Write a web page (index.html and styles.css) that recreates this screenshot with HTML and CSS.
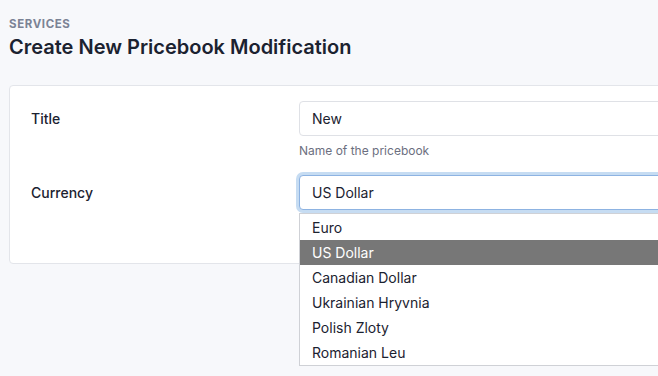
FILE: index.html
```html
<!DOCTYPE html>
<html>
<head>
<meta charset="utf-8">
<link rel="stylesheet" href="styles.css">
</head>
<body>
<div class="page">
  <div class="eyebrow">SERVICES</div>
  <h1 class="heading">Create New Pricebook Modification</h1>
  <div class="card">
    <div class="row">
      <div class="label">Title</div>
      <div class="field">
        <div class="input">New</div>
        <div class="help">Name of the pricebook</div>
      </div>
    </div>
    <div class="row row-currency">
      <div class="label">Currency</div>
      <div class="field select-wrap">
        <div class="input focused">US Dollar</div>
        <ul class="dropdown">
          <li class="opt">Euro</li>
          <li class="opt selected">US Dollar</li>
          <li class="opt">Canadian Dollar</li>
          <li class="opt">Ukrainian Hryvnia</li>
          <li class="opt">Polish Zloty</li>
          <li class="opt">Romanian Leu</li>
        </ul>
      </div>
    </div>
  </div>
</div>
</body>
</html>
```
FILE: styles.css
```css
html, body {
  margin: 0;
  padding: 0;
  background: #f7f8fb;
  overflow: hidden;
  width: 658px;
  height: 376px;
}
body {
  font-family: Inter, "Noto Sans", sans-serif;
  color: #1b2230;
}
.page {
  padding: 17px 0 0 9px;
  width: 720px;
}
.eyebrow {
  font-size: 11.5px;
  font-weight: 700;
  letter-spacing: 0.6px;
  color: #7b8395;
  line-height: 14px;
}
.heading {
  margin: 4px 0 0 0;
  font-size: 20px;
  font-weight: 600;
  line-height: 25px;
  color: #1b2230;
  letter-spacing: 0;
}
.card {
  margin-top: 25px;
  background: #fff;
  border: 1px solid #e3e5ea;
  border-radius: 4px;
  padding: 15px 0 53px 21px;
}
.row {
  display: grid;
  grid-template-columns: 268px 1fr;
  align-items: start;
}
.row-currency {
  margin-top: 17px;
}
.label {
  font-size: 14px;
  font-weight: 450;
  line-height: 35px;
  color: #1b2230;
}
.field {
  display: flex;
  flex-direction: column;
}
.input {
  height: 33px;
  border: 1px solid #dfe1e6;
  border-radius: 4px;
  padding-left: 12px;
  font-size: 14px;
  line-height: 33px;
  color: #1b2230;
  background: #fff;
}
.input.focused {
  border-color: #8db3e2;
  box-shadow: 0 0 0 3px #c6dcf2;
}
.help {
  margin-top: 8px;
  font-size: 12px;
  line-height: 14px;
  color: #6c6f80;
}
.select-wrap {
  position: relative;
}
.dropdown {
  position: absolute;
  left: 0;
  top: 38px;
  width: 400px;
  margin: 0;
  padding: 1px 0 0 0;
  list-style: none;
  background: #fff;
  border: 1px solid #cfd1d6;
  z-index: 5;
}
.opt {
  height: 25px;
  line-height: 25px;
  padding-left: 12px;
  font-size: 14px;
  color: #1b2230;
}
.opt.selected {
  background: #777777;
  color: #fff;
}
```
